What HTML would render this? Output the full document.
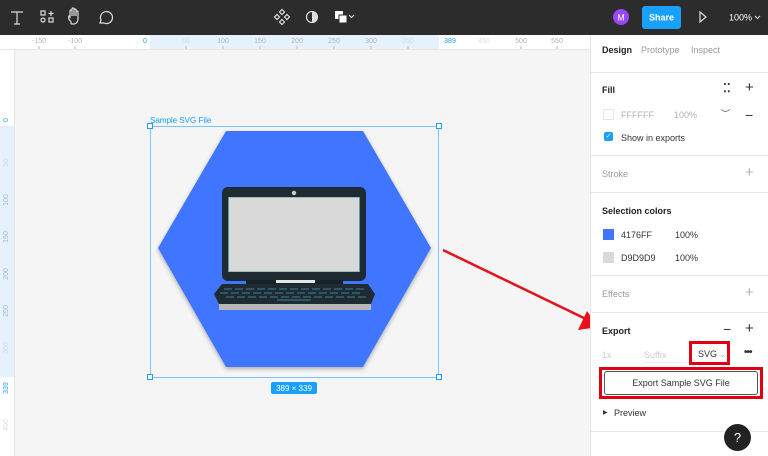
<!DOCTYPE html>
<html><head><style>
*{margin:0;padding:0;box-sizing:border-box}
body{width:768px;height:456px;overflow:hidden;font-family:"Liberation Sans",sans-serif;background:#f5f5f5;position:relative}
.top{position:absolute;left:0;top:0;width:768px;height:35px;background:#2c2c2c}
.rt{position:absolute;left:0;top:35px;width:590px;height:15px;background:#fff;border-bottom:1px solid #e6e6e6}
.rl{position:absolute;left:0;top:50px;width:15px;height:406px;background:#fff;border-right:1px solid #e6e6e6}
.panel{position:absolute;left:590px;top:35px;width:178px;height:421px;background:#fff;border-left:1px solid #e6e6e6;font-size:9px;color:#333}
.t{position:absolute;white-space:nowrap}
.hr{position:absolute;left:0;width:178px;height:1px;background:#e8e8e8}
.b{font-weight:bold;color:#222}
.g{color:#b3b3b3}
</style></head><body>
<div class="top">
<svg width="768" height="35" style="position:absolute;left:0;top:0">
<g stroke="#ddd" fill="none" stroke-width="1.2">
<path d="M11 12h12M17 12v12M14 24h6"/>
<rect x="41" y="11" width="4" height="4"/><path d="M51 11v5M48.5 13.5h5"/><circle cx="43" cy="20" r="2"/><rect x="49" y="18" width="4" height="4"/>
<path d="M71 22c-2-2-3-4-2-6l1 1v-6a1 1 0 012 0v5-7a1 1 0 012 0v7-6a1 1 0 012 0v6-4a1 1 0 012 0v7c0 3-2 5-4 5h-2c-1 0-1-1-1-1z"/>
<path d="M100 23l1-3a6 6 0 113 3z"/>
<path d="M282 9.5l2.5 2.5-2.5 2.5-2.5-2.5zM277 14.5l2.5 2.5-2.5 2.5-2.5-2.5zM287 14.5l2.5 2.5-2.5 2.5-2.5-2.5zM282 19.5l2.5 2.5-2.5 2.5-2.5-2.5z"/>
<circle cx="312" cy="17" r="5.5"/>
<path d="M349 15l2.5 2.5 2.5-2.5" stroke-width="1"/>
<path d="M700 12l6 5-6 5z"/>
<path d="M755 16l2.5 2.5 2.5-2.5" stroke-width="1"/>
</g>
<path d="M312 11.5a5.5 5.5 0 010 11z" fill="#ddd"/>
<rect x="335" y="11" width="8" height="8" fill="#fff"/><rect x="339" y="15" width="8" height="8" fill="#fff" stroke="#2c2c2c"/>
<circle cx="621" cy="17" r="8" fill="#9747ff"/>
<text x="621" y="20.5" font-size="9" fill="#fff" text-anchor="middle" font-family="Liberation Sans">M</text>
<rect x="642" y="6" width="39" height="23" rx="3" fill="#18a0fb"/>
<text x="661.5" y="20.5" font-size="9" fill="#fff" text-anchor="middle" font-weight="bold" font-family="Liberation Sans">Share</text>
<text x="729" y="20.5" font-size="9" fill="#fff" font-family="Liberation Sans">100%</text>
</svg>
</div>
<div class="rt">
<div style="position:absolute;left:150px;top:0;width:289px;height:14px;background:#e5f2fd"></div>
<svg width="590" height="15" style="position:absolute;left:0;top:0" font-family="Liberation Sans" font-size="7" fill="#b3b3b3" text-anchor="middle">
<text x="39" y="8">-150</text><text x="75" y="8">-100</text><text x="145" y="8" fill="#18a0fb">0</text><text x="186" y="8" fill="#cfdbe6">50</text><text x="223" y="8">100</text><text x="260" y="8">150</text><text x="297" y="8">200</text><text x="334" y="8">250</text><text x="371" y="8">300</text><text x="408" y="8" fill="#cfdbe6">350</text><text x="450" y="8" fill="#18a0fb">389</text><text x="484" y="8" fill="#ddd">450</text><text x="521" y="8">500</text><text x="557" y="8">550</text>
<g stroke="#bbb"><path d="M39 11v3M75 11v3M186 11v3M223 11v3M260 11v3M297 11v3M334 11v3M371 11v3M408 11v3M521 11v3M557 11v3"/></g>
</svg>
</div>
<div class="rl">
<div style="position:absolute;left:0;top:76px;width:14px;height:251px;background:#e5f2fd"></div>
<svg width="15" height="406" style="position:absolute;left:0;top:0" font-family="Liberation Sans" font-size="7" fill="#b3b3b3" text-anchor="middle">
<g transform="rotate(-90)">
<text x="-70" y="8" fill="#18a0fb">0</text><text x="-113" y="8" fill="#cfdbe6">50</text><text x="-150" y="8">100</text><text x="-187" y="8">150</text><text x="-224" y="8">200</text><text x="-261" y="8">250</text><text x="-298" y="8" fill="#cfdbe6">300</text><text x="-338" y="8" fill="#18a0fb">339</text><text x="-375" y="8" fill="#ddd">400</text>
</g>
</svg>
</div>
<svg width="590" height="406" style="position:absolute;left:0;top:50px" font-family="Liberation Sans">
<defs><filter id="sh"><feDropShadow dx="0" dy="2" stdDeviation="2" flood-opacity="0.3"/></filter></defs>
<polygon points="226,81 363,81 431,198 363,317 226,317 158,198" fill="#4176ff" filter="url(#sh)"/>
<rect x="222" y="137" width="144" height="94" rx="6" fill="#1e2b33"/>
<rect x="228" y="147" width="132" height="75" fill="#5a9aa0"/>
<rect x="229" y="147.5" width="130" height="74" fill="#d9d9d9"/>
<circle cx="294" cy="143" r="2.2" fill="#ccc"/>
<rect x="246" y="230" width="97" height="5" fill="#16242a"/>
<rect x="276" y="230" width="39" height="3" fill="#e6e6e6"/>
<rect x="219" y="252" width="152" height="8" fill="#b7b7b7"/>
<polygon points="222,234 368,234 375,244 371,254 219,254 214,244" fill="#1e2b33"/>
<g fill="#2e5565">
<g id="r1"><rect x="224" y="238" width="8" height="2"/><rect x="235" y="238" width="8" height="2"/><rect x="246" y="238" width="8" height="2"/><rect x="257" y="238" width="8" height="2"/><rect x="268" y="238" width="8" height="2"/><rect x="279" y="238" width="8" height="2"/><rect x="290" y="238" width="8" height="2"/><rect x="301" y="238" width="8" height="2"/><rect x="312" y="238" width="8" height="2"/><rect x="323" y="238" width="8" height="2"/><rect x="334" y="238" width="8" height="2"/><rect x="345" y="238" width="8" height="2"/><rect x="356" y="238" width="8" height="2"/></g>
<use href="#r1" transform="translate(-4,4)"/><use href="#r1" transform="translate(2,8)"/>
<rect x="277" y="249" width="34" height="2"/>
</g>
<rect x="150.5" y="76.5" width="288" height="251" fill="none" stroke="#7cc4fa"/>
<g fill="#fff" stroke="#18a0fb"><rect x="147.5" y="73.5" width="5" height="5"/><rect x="436.5" y="73.5" width="5" height="5"/><rect x="147.5" y="324.5" width="5" height="5"/><rect x="436.5" y="324.5" width="5" height="5"/></g>
<text x="150" y="73" font-size="8" fill="#18a0fb">Sample SVG File</text>
<rect x="271" y="332" width="46" height="12" rx="2" fill="#18a0fb"/>
<text x="294" y="341" font-size="8" fill="#fff" text-anchor="middle">389 × 339</text>
<line x1="443" y1="200" x2="588" y2="270" stroke="#e8101a" stroke-width="2.5"/>
<polygon points="598,277 578,280 587,261" fill="#e8101a"/>
</svg>
<div class="panel">
<div class="t b" style="left:11px;top:10px">Design</div>
<div class="t g" style="left:50px;top:10px;color:#999">Prototype</div>
<div class="t g" style="left:100px;top:10px;color:#999">Inspect</div>
<div class="hr" style="top:37px"></div>
<div class="t b" style="left:11px;top:50px">Fill</div>
<div class="t" style="left:132px;top:46px;font-size:12px;font-weight:bold">⁚⁚</div>
<div class="t" style="left:154px;top:44px;font-size:15px;font-weight:300">+</div>
<div style="position:absolute;left:12px;top:74px;width:11px;height:11px;border:1px solid #e6e6e6"></div>
<div class="t g" style="left:30px;top:75px">FFFFFF</div>
<div class="t g" style="left:83px;top:75px">100%</div>
<div class="t" style="left:130px;top:72px;font-size:9px">︶</div>
<div class="t" style="left:154px;top:72px;font-size:14px">−</div>
<div style="position:absolute;left:13px;top:97px;width:9px;height:9px;background:#18a0fb;border-radius:2px;color:#fff;font-size:7px;text-align:center;line-height:9px">✓</div>
<div class="t" style="left:30px;top:98px">Show in exports</div>
<div class="hr" style="top:120px"></div>
<div class="t" style="left:11px;top:134px;color:#999">Stroke</div>
<div class="t g" style="left:154px;top:129px;font-size:15px">+</div>
<div class="hr" style="top:157px"></div>
<div class="t b" style="left:11px;top:171px">Selection colors</div>
<div style="position:absolute;left:12px;top:194px;width:11px;height:11px;background:#4176ff"></div>
<div class="t" style="left:30px;top:195px">4176FF</div>
<div class="t" style="left:84px;top:195px">100%</div>
<div style="position:absolute;left:12px;top:217px;width:11px;height:11px;background:#d9d9d9"></div>
<div class="t" style="left:30px;top:218px">D9D9D9</div>
<div class="t" style="left:84px;top:218px">100%</div>
<div class="hr" style="top:240px"></div>
<div class="t" style="left:11px;top:254px;color:#999">Effects</div>
<div class="t g" style="left:154px;top:249px;font-size:15px">+</div>
<div class="hr" style="top:277px"></div>
<div class="t b" style="left:11px;top:291px">Export</div>
<div class="t" style="left:132px;top:286px;font-size:14px">−</div>
<div class="t" style="left:154px;top:285px;font-size:15px">+</div>
<div class="t" style="left:11px;top:315px;color:#ccc">1x</div>
<div class="t" style="left:53px;top:315px;color:#ccc">Suffix</div>
<div style="position:absolute;left:53px;top:327px;width:42px;height:1px;background:#eee"></div>
<div style="position:absolute;left:98px;top:306px;width:41px;height:24px;border:3px solid #e00012"></div>
<div class="t" style="left:107px;top:314px">SVG <span style="color:#999;font-size:7px">⌄</span></div>
<div class="t" style="left:153px;top:312px;font-size:10px;font-weight:bold;letter-spacing:-1px">•••</div>
<div style="position:absolute;left:8px;top:332px;width:164px;height:32px;border:3px solid #e00012"></div>
<div style="position:absolute;left:13px;top:336px;width:154px;height:24px;border:1px solid #555;border-radius:3px;text-align:center;line-height:22px">Export Sample SVG File</div>
<div class="t" style="left:12px;top:374px;font-size:6px">▶</div>
<div class="t" style="left:23px;top:373px">Preview</div>
<div class="hr" style="top:396px"></div>
<div style="position:absolute;left:133px;top:389px;width:27px;height:27px;border-radius:50%;background:#222;color:#fff;font-size:13px;text-align:center;line-height:27px">?</div>
</div>
</body></html>
